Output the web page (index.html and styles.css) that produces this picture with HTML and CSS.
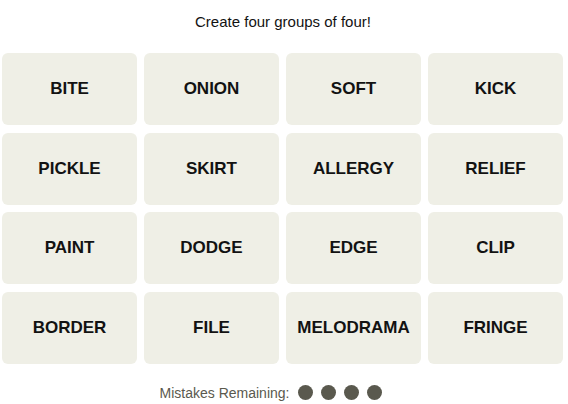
FILE: index.html
```html
<!DOCTYPE html>
<html lang="en">
<head>
    <meta charset="UTF-8">
    <meta name="viewport" content="width=device-width, initial-scale=1.0">
    <title>Connections</title>
    <link rel="stylesheet" href="styles.css">
</head>
<body>
    <div class="game">
        <p class="prompt">Create four groups of four!</p>

        <div class="board">
            <button class="tile">BITE</button>
            <button class="tile">ONION</button>
            <button class="tile">SOFT</button>
            <button class="tile">KICK</button>
            <button class="tile">PICKLE</button>
            <button class="tile">SKIRT</button>
            <button class="tile">ALLERGY</button>
            <button class="tile">RELIEF</button>
            <button class="tile">PAINT</button>
            <button class="tile">DODGE</button>
            <button class="tile">EDGE</button>
            <button class="tile">CLIP</button>
            <button class="tile">BORDER</button>
            <button class="tile">FILE</button>
            <button class="tile">MELODRAMA</button>
            <button class="tile">FRINGE</button>
        </div>

        <div class="mistakes">
            <span class="mistakes-label">Mistakes Remaining:</span>
            <span class="dots">
                <span class="dot"></span>
                <span class="dot"></span>
                <span class="dot"></span>
                <span class="dot"></span>
            </span>
        </div>
    </div>
</body>
</html>
```

FILE: styles.css
```css
* {
    margin: 0;
    padding: 0;
    box-sizing: border-box;
}

body {
    background: #fff;
    color: #121212;
    font-family: 'Liberation Sans', Arial, sans-serif;
}

.game {
    width: 561px;
    margin: 0 0 0 2px;
}

.prompt {
    text-align: center;
    font-size: 15px;
    line-height: 18px;
    padding-top: 13px;
    margin-bottom: 22px;
    margin-left: 1px;
}

.board {
    display: grid;
    grid-template-columns: repeat(4, 135px);
    grid-auto-rows: 72px;
    column-gap: 7px;
    row-gap: 7.5px;
}

.tile {
    background: #efefe6;
    border: none;
    border-radius: 6px;
    color: #121212;
    font-family: 'Liberation Sans', Arial, sans-serif;
    font-size: 17px;
    font-weight: bold;
    cursor: pointer;
}

.mistakes {
    display: flex;
    justify-content: center;
    align-items: center;
    gap: 9px;
    margin-top: 21px;
    padding-right: 23px;
}

.mistakes-label {
    font-size: 14px;
    color: #5a594e;
}

.dots {
    display: flex;
    gap: 8px;
}

.dot {
    width: 15px;
    height: 15px;
    border-radius: 50%;
    background: #5a594e;
}
```
